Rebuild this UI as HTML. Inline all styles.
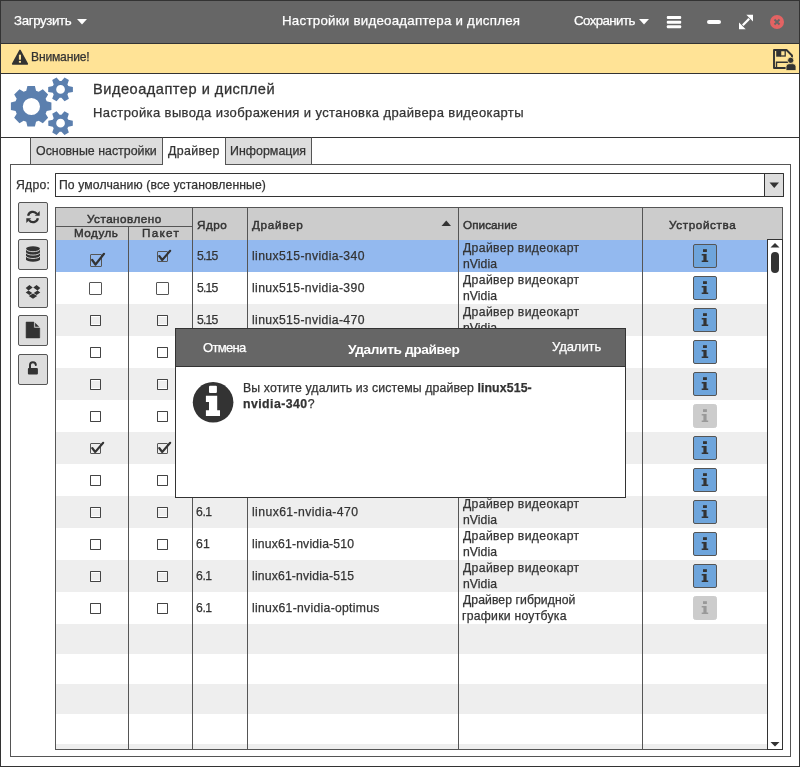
<!DOCTYPE html>
<html><head><meta charset="utf-8">
<style>
*{box-sizing:border-box;margin:0;padding:0}
html,body{width:800px;height:767px;overflow:hidden;background:#fff}
body{position:relative;font-family:"Liberation Sans",sans-serif;color:#333;font-size:12.3px}
.a{position:absolute}
.t{position:absolute;white-space:nowrap;line-height:1;-webkit-text-stroke:0.25px currentColor;will-change:transform}
.cb{position:absolute;width:12.5px;height:12.5px;border:1.3px solid #555;background:#fff;border-radius:1px}
.cbu{position:absolute;width:11px;height:11px;border:1.2px solid #444;border-radius:0.7px;box-shadow:inset 0 1px #fff,inset 0 -1px #fff}
.cbc{position:absolute;width:11px;height:11px;border:1.3px solid #555;border-radius:1px}
.ib{position:absolute;left:693px;width:24px;height:24px;background:#6ea5dc;border:1px solid #555;border-radius:2px}
.ibd{position:absolute;left:693px;width:24px;height:24px;background:#ccc;border:1px solid #ccc;border-radius:2.5px}
.sb{position:absolute;left:18px;width:30px;height:31px;background:#ddd;border:1.3px solid #555;border-radius:2px}
</style></head><body>

<div class="a" style="left:0;top:0;width:800px;height:767px;border:1px solid #333"></div>
<div class="a" style="left:1px;top:1px;width:798px;height:42px;background:#666"></div>
<div class="a" style="left:1px;top:43px;width:798px;height:1px;background:#333"></div>
<div class="t" style="left:14.00px;top:14.49px;font-size:13.3px;font-weight:400;letter-spacing:-0.375px;color:#fff;-webkit-text-stroke:0.25px #fff;">Загрузить</div>
<svg class="a" style="left:77px;top:19px" width="10" height="6"><path d="M0 0H10L5 5.5Z" fill="#fff"/></svg>
<div class="t" style="left:282.00px;top:14.49px;font-size:13.3px;font-weight:400;letter-spacing:0.25px;color:#fff;-webkit-text-stroke:0.25px #fff;">Настройки видеоадаптера и дисплея</div>
<div class="t" style="left:574.25px;top:14.49px;font-size:13.3px;font-weight:400;letter-spacing:-0.594px;color:#fff;-webkit-text-stroke:0.25px #fff;">Сохранить</div>
<svg class="a" style="left:639px;top:19px" width="10" height="6"><path d="M0 0H10L5 5.5Z" fill="#fff"/></svg>
<svg class="a" style="left:666px;top:15px" width="16" height="15"><rect x="0.8" y="1" width="14.4" height="3" rx="1" fill="#fff"/><rect x="0.8" y="5.75" width="14.4" height="3" rx="1" fill="#fff"/><rect x="0.8" y="10.2" width="14.4" height="3" rx="1" fill="#fff"/></svg>
<svg class="a" style="left:706px;top:19px" width="16" height="6"><rect x="1" y="1" width="14" height="4" rx="2" fill="#fff"/></svg>
<svg class="a" style="left:736px;top:12px" width="20" height="20"><path d="M10.3 2.8H17V9.5Z" fill="#fff"/><path d="M3 10.5V17.2H9.7Z" fill="#fff"/><path d="M13.2 6.8L6.8 13.2" stroke="#fff" stroke-width="2.3"/></svg>
<svg class="a" style="left:767px;top:12px" width="20" height="20"><circle cx="10" cy="10" r="7" fill="#e36363"/><path d="M7.5 7.5L12.5 12.5M12.5 7.5L7.5 12.5" stroke="#666" stroke-width="1.8" stroke-linecap="butt"/></svg>
<div class="a" style="left:1px;top:44px;width:798px;height:29px;background:#ffe396"></div>
<div class="a" style="left:1px;top:73px;width:798px;height:1px;background:#333"></div>
<svg class="a" style="left:11px;top:49px" width="18" height="17"><path d="M9 1.4L16.3 15H1.7Z" fill="#333" stroke="#333" stroke-width="1.6" stroke-linejoin="round"/><rect x="7.9" y="5.7" width="2.1" height="5" fill="#ffe396"/><rect x="7.9" y="11.9" width="2.1" height="1.8" fill="#ffe396"/></svg>
<div class="t" style="left:31.40px;top:50.96px;font-size:12.1px;font-weight:400;letter-spacing:-0.175px;color:#333;-webkit-text-stroke:0.25px #333;">Внимание!</div>
<svg class="a" style="left:772px;top:48px" width="26" height="24"><path d="M2 2H14.5L20 7.5V20H2Z" fill="none" stroke="#333" stroke-width="1.9" stroke-linejoin="round"/><rect x="4.2" y="2" width="4.6" height="6.7" fill="#333"/><rect x="8.6" y="2.6" width="4.6" height="5.4" fill="none" stroke="#333" stroke-width="1.3"/><path d="M4.5 20V14.2H16" fill="none" stroke="#333" stroke-width="1.4"/><circle cx="18.7" cy="12.3" r="3.1" fill="#333" stroke="#ffe396" stroke-width="0.8"/><path d="M14 22.5V18.7Q14 15.7 17 15.7H21Q24 15.7 24 18.7V22.5Z" fill="#333" stroke="#ffe396" stroke-width="0.8"/></svg>
<svg class="a" style="left:5px;top:74px" width="75" height="62"><path fill="#5b7fae" fill-rule="evenodd" d="M41.70 27.30 L46.41 28.45 L46.41 35.95 L41.70 37.10 L40.61 39.73 L43.12 43.87 L37.82 49.17 L33.68 46.66 L31.05 47.75 L29.90 52.46 L22.40 52.46 L21.25 47.75 L18.62 46.66 L14.48 49.17 L9.18 43.87 L11.69 39.73 L10.60 37.10 L5.89 35.95 L5.89 28.45 L10.60 27.30 L11.69 24.67 L9.18 20.53 L14.48 15.23 L18.62 17.74 L21.25 16.65 L22.40 11.94 L29.90 11.94 L31.05 16.65 L33.68 17.74 L37.82 15.23 L43.12 20.53 L40.61 24.67Z M35.00 32.50 A8.6 8.6 0 1 0 17.80 32.50 A8.6 8.6 0 1 0 35.00 32.50Z M63.32 11.95 L67.90 12.90 L67.90 17.90 L63.32 18.85 L62.42 20.40 L63.89 24.84 L59.56 27.34 L56.45 23.85 L54.65 23.85 L51.54 27.34 L47.21 24.84 L48.68 20.40 L47.78 18.85 L43.20 17.90 L43.20 12.90 L47.78 11.95 L48.68 10.40 L47.21 5.96 L51.54 3.46 L54.65 6.95 L56.45 6.95 L59.56 3.46 L63.89 5.96 L62.42 10.40Z M59.90 15.40 A4.35 4.35 0 1 0 51.20 15.40 A4.35 4.35 0 1 0 59.90 15.40Z M63.32 45.75 L67.80 46.70 L67.80 51.70 L63.32 52.65 L62.42 54.20 L63.84 58.56 L59.51 61.06 L56.45 57.65 L54.65 57.65 L51.59 61.06 L47.26 58.56 L48.68 54.20 L47.78 52.65 L43.30 51.70 L43.30 46.70 L47.78 45.75 L48.68 44.20 L47.26 39.84 L51.59 37.34 L54.65 40.75 L56.45 40.75 L59.51 37.34 L63.84 39.84 L62.42 44.20Z M59.90 49.20 A4.35 4.35 0 1 0 51.20 49.20 A4.35 4.35 0 1 0 59.90 49.20Z"/></svg>
<div class="t" style="left:92.80px;top:82.14px;font-size:14.6px;font-weight:400;letter-spacing:0.505px;color:#333;-webkit-text-stroke:0.3px #333;">Видеоадаптер и дисплей</div>
<div class="t" style="left:93.20px;top:105.50px;font-size:13.0px;font-weight:400;letter-spacing:0.397px;color:#333;-webkit-text-stroke:0.25px #333;">Настройка вывода изображения и установка драйвера видеокарты</div>
<div class="a" style="left:1px;top:137px;width:798px;height:1px;background:#333"></div>
<div class="a" style="left:10px;top:164px;width:781px;height:593px;border:1px solid #555"></div>
<div class="a" style="left:30px;top:137px;width:133px;height:28px;background:#ddd;border:1px solid #555;border-top-color:#333"></div>
<div class="a" style="left:225px;top:137px;width:87px;height:28px;background:#ddd;border:1px solid #555;border-top-color:#333"></div>
<div class="a" style="left:162px;top:137px;width:64px;height:28px;background:#fff;border:1px solid #555;border-top-color:#333;border-bottom:none"></div>
<div class="t" style="left:36.40px;top:144.50px;font-size:12.4px;font-weight:400;letter-spacing:-0.006px;color:#333;-webkit-text-stroke:0.25px #333;">Основные настройки</div>
<div class="t" style="left:168.40px;top:144.50px;font-size:12.4px;font-weight:400;letter-spacing:0.333px;color:#333;-webkit-text-stroke:0.25px #333;">Драйвер</div>
<div class="t" style="left:230.00px;top:144.50px;font-size:12.4px;font-weight:400;letter-spacing:0.022px;color:#333;-webkit-text-stroke:0.25px #333;">Информация</div>
<div class="t" style="left:16.40px;top:178.57px;font-size:12.2px;font-weight:400;letter-spacing:0.25px;color:#333;-webkit-text-stroke:0.25px #333;">Ядро:</div>
<div class="a" style="left:55px;top:173px;width:729px;height:24px;border:1.3px solid #333;border-radius:0.5px;background:#fff"></div>
<div class="a" style="left:764px;top:174px;width:19px;height:22px;background:#ddd;border-left:1.3px solid #333"></div>
<svg class="a" style="left:769px;top:182px" width="11" height="7"><path d="M0.5 0.5H10L5.25 6Z" fill="#333"/></svg>
<div class="t" style="left:59.00px;top:178.57px;font-size:12.2px;font-weight:400;letter-spacing:0.113px;color:#333;-webkit-text-stroke:0.25px #333;">По умолчанию (все установленные)</div>
<div class="sb" style="top:202px"></div>
<div class="sb" style="top:239px"></div>
<div class="sb" style="top:277px"></div>
<div class="sb" style="top:315px"></div>
<div class="sb" style="top:354px"></div>
<svg class="a" style="left:24px;top:208px" width="18" height="18"><path d="M4.1 7.7A4.9 4.9 0 0 1 12.9 5.9" fill="none" stroke="#333" stroke-width="2.3"/><path d="M10.8 7.7H15.7V3Z" fill="#333"/><path d="M13.9 10.3A4.9 4.9 0 0 1 5.1 12.1" fill="none" stroke="#333" stroke-width="2.3"/><path d="M7.2 10.3H2.3V15Z" fill="#333"/></svg>
<svg class="a" style="left:24px;top:244px" width="18" height="20"><path d="M2 4.9A7 2.6 0 0 1 16 4.9V15.2A7 2.6 0 0 1 2 15.2Z" fill="#333"/><path d="M2 5.1A7 2.6 0 0 0 16 5.1M2 8.5A7 2.6 0 0 0 16 8.5M2 11.9A7 2.6 0 0 0 16 11.9" fill="none" stroke="#ddd" stroke-width="0.9"/></svg>
<svg class="a" style="left:24px;top:282px" width="18" height="20"><path d="M5.4 3L8.7 5.4L4.5 8.4L1.7 6Z M12.6 3L16.3 6L13.5 8.4L9.3 5.4Z M1.7 10.6L4.5 8.4L8.3 10.9L5.4 13.1Z M16.3 10.6L13.5 8.4L9.7 10.9L12.6 13.1Z M9 11.4L13.2 14L9 16.8L4.8 14Z" fill="#333"/></svg>
<svg class="a" style="left:22px;top:318px" width="22" height="24"><path d="M4.1 4.1H11.9V10H17.7V19.9H4.1Z" fill="#333" stroke="#333" stroke-width="0.6" stroke-linejoin="round"/><path d="M13.1 4.7V8.8H17.2Z" fill="#333"/></svg>
<svg class="a" style="left:22px;top:356px" width="22" height="26"><path d="M8 12.5V9.1A2.9 2.9 0 0 1 13.8 9.1" fill="none" stroke="#333" stroke-width="2" stroke-linecap="round"/><rect x="5.9" y="12" width="10" height="6.6" rx="1" fill="#333"/></svg>
<div class="a" style="left:55px;top:207px;width:728px;height:33px;background:#ccc"></div>
<div class="a" style="left:55px;top:240px;width:712px;height:32px;background:#93b9ef"></div>
<div class="t" style="left:196.75px;top:250.17px;font-size:12.2px;font-weight:400;letter-spacing:-0.817px;color:#333;-webkit-text-stroke:0.25px #333;">5.15</div>
<div class="t" style="left:251.75px;top:250.17px;font-size:12.2px;font-weight:400;letter-spacing:0.375px;color:#333;-webkit-text-stroke:0.25px #333;">linux515-nvidia-340</div>
<div class="t" style="left:462.60px;top:242.37px;font-size:12.2px;font-weight:400;letter-spacing:0.363px;color:#333;-webkit-text-stroke:0.25px #333;">Драйвер видеокарт</div>
<div class="t" style="left:462.90px;top:258.37px;font-size:12.2px;font-weight:400;letter-spacing:0.06px;color:#333;-webkit-text-stroke:0.25px #333;">nVidia</div>
<div class="cbc" style="left:89.5px;top:254.4px;width:12.5px;height:12.2px"></div>
<svg class="a" style="left:89.5px;top:252px" width="16" height="16"><path d="M2.2 8L5.5 12.5L14 1.8" fill="none" stroke="#333" stroke-width="2.2" stroke-linecap="round" stroke-linejoin="round"/></svg>
<div class="cbc" style="left:157.2px;top:251.2px"></div>
<svg class="a" style="left:157.2px;top:249px" width="16" height="16"><path d="M2.2 7L5.2 11L13.2 1.8" fill="none" stroke="#333" stroke-width="2.1" stroke-linecap="round" stroke-linejoin="round"/></svg>
<div class="ib" style="top:244px"><svg class="a" style="left:-1px;top:-1px" width="24" height="24"><rect x="10" y="5.2" width="3.9" height="2.8" fill="#333"/><path d="M8.7 10H13.6V16.4H15.2V18.1H8.7V16.4H10.4V11.6H8.7Z" fill="#333"/></svg></div>
<div class="a" style="left:55px;top:272px;width:712px;height:32px;background:#fff"></div>
<div class="t" style="left:196.75px;top:282.17px;font-size:12.2px;font-weight:400;letter-spacing:-0.817px;color:#333;-webkit-text-stroke:0.25px #333;">5.15</div>
<div class="t" style="left:251.75px;top:282.17px;font-size:12.2px;font-weight:400;letter-spacing:0.375px;color:#333;-webkit-text-stroke:0.25px #333;">linux515-nvidia-390</div>
<div class="t" style="left:462.60px;top:274.37px;font-size:12.2px;font-weight:400;letter-spacing:0.363px;color:#333;-webkit-text-stroke:0.25px #333;">Драйвер видеокарт</div>
<div class="t" style="left:462.90px;top:290.37px;font-size:12.2px;font-weight:400;letter-spacing:0.06px;color:#333;-webkit-text-stroke:0.25px #333;">nVidia</div>
<div class="cb" style="left:89.25px;top:282px;width:12.75px;height:12.75px"></div>
<div class="cb" style="left:156.1px;top:282px;width:12.75px;height:12.75px"></div>
<div class="ib" style="top:276px"><svg class="a" style="left:-1px;top:-1px" width="24" height="24"><rect x="10" y="5.2" width="3.9" height="2.8" fill="#333"/><path d="M8.7 10H13.6V16.4H15.2V18.1H8.7V16.4H10.4V11.6H8.7Z" fill="#333"/></svg></div>
<div class="a" style="left:55px;top:304px;width:712px;height:32px;background:#eeeeee"></div>
<div class="t" style="left:196.75px;top:314.17px;font-size:12.2px;font-weight:400;letter-spacing:-0.817px;color:#333;-webkit-text-stroke:0.25px #333;">5.15</div>
<div class="t" style="left:251.75px;top:314.17px;font-size:12.2px;font-weight:400;letter-spacing:0.375px;color:#333;-webkit-text-stroke:0.25px #333;">linux515-nvidia-470</div>
<div class="t" style="left:462.60px;top:306.37px;font-size:12.2px;font-weight:400;letter-spacing:0.363px;color:#333;-webkit-text-stroke:0.25px #333;">Драйвер видеокарт</div>
<div class="t" style="left:462.90px;top:322.37px;font-size:12.2px;font-weight:400;letter-spacing:0.06px;color:#333;-webkit-text-stroke:0.25px #333;">nVidia</div>
<div class="cbu" style="left:90.2px;top:315px"></div>
<div class="cbu" style="left:157.1px;top:315px"></div>
<div class="ib" style="top:308px"><svg class="a" style="left:-1px;top:-1px" width="24" height="24"><rect x="10" y="5.2" width="3.9" height="2.8" fill="#333"/><path d="M8.7 10H13.6V16.4H15.2V18.1H8.7V16.4H10.4V11.6H8.7Z" fill="#333"/></svg></div>
<div class="a" style="left:55px;top:336px;width:712px;height:32px;background:#fff"></div>
<div class="t" style="left:196.75px;top:346.17px;font-size:12.2px;font-weight:400;letter-spacing:-0.817px;color:#333;-webkit-text-stroke:0.25px #333;">5.15</div>
<div class="t" style="left:251.75px;top:346.17px;font-size:12.2px;font-weight:400;letter-spacing:0.375px;color:#333;-webkit-text-stroke:0.25px #333;">linux515-nvidia-510</div>
<div class="t" style="left:462.60px;top:338.37px;font-size:12.2px;font-weight:400;letter-spacing:0.363px;color:#333;-webkit-text-stroke:0.25px #333;">Драйвер видеокарт</div>
<div class="t" style="left:462.90px;top:354.37px;font-size:12.2px;font-weight:400;letter-spacing:0.06px;color:#333;-webkit-text-stroke:0.25px #333;">nVidia</div>
<div class="cbu" style="left:90.2px;top:347px"></div>
<div class="cbu" style="left:157.1px;top:347px"></div>
<div class="ib" style="top:340px"><svg class="a" style="left:-1px;top:-1px" width="24" height="24"><rect x="10" y="5.2" width="3.9" height="2.8" fill="#333"/><path d="M8.7 10H13.6V16.4H15.2V18.1H8.7V16.4H10.4V11.6H8.7Z" fill="#333"/></svg></div>
<div class="a" style="left:55px;top:368px;width:712px;height:32px;background:#eeeeee"></div>
<div class="t" style="left:196.75px;top:378.17px;font-size:12.2px;font-weight:400;letter-spacing:-0.817px;color:#333;-webkit-text-stroke:0.25px #333;">5.15</div>
<div class="t" style="left:251.75px;top:378.17px;font-size:12.2px;font-weight:400;letter-spacing:0.375px;color:#333;-webkit-text-stroke:0.25px #333;">linux515-nvidia-515</div>
<div class="t" style="left:462.60px;top:370.37px;font-size:12.2px;font-weight:400;letter-spacing:0.363px;color:#333;-webkit-text-stroke:0.25px #333;">Драйвер видеокарт</div>
<div class="t" style="left:462.90px;top:386.37px;font-size:12.2px;font-weight:400;letter-spacing:0.06px;color:#333;-webkit-text-stroke:0.25px #333;">nVidia</div>
<div class="cbu" style="left:90.2px;top:379px"></div>
<div class="cbu" style="left:157.1px;top:379px"></div>
<div class="ib" style="top:372px"><svg class="a" style="left:-1px;top:-1px" width="24" height="24"><rect x="10" y="5.2" width="3.9" height="2.8" fill="#333"/><path d="M8.7 10H13.6V16.4H15.2V18.1H8.7V16.4H10.4V11.6H8.7Z" fill="#333"/></svg></div>
<div class="a" style="left:55px;top:400px;width:712px;height:32px;background:#fff"></div>
<div class="t" style="left:196.75px;top:410.17px;font-size:12.2px;font-weight:400;letter-spacing:-0.817px;color:#333;-webkit-text-stroke:0.25px #333;">5.15</div>
<div class="t" style="left:251.75px;top:410.17px;font-size:12.2px;font-weight:400;letter-spacing:0.375px;color:#333;-webkit-text-stroke:0.25px #333;">linux515-nvidia-optimus</div>
<div class="t" style="left:462.60px;top:402.37px;font-size:12.2px;font-weight:400;letter-spacing:0.075px;color:#333;-webkit-text-stroke:0.25px #333;">Драйвер гибридной</div>
<div class="t" style="left:461.60px;top:418.37px;font-size:12.2px;font-weight:400;letter-spacing:0.26px;color:#333;-webkit-text-stroke:0.25px #333;">графики ноутбука</div>
<div class="cbu" style="left:90.2px;top:411px"></div>
<div class="cbu" style="left:157.1px;top:411px"></div>
<div class="ibd" style="top:404px"><svg class="a" style="left:-1px;top:-1px" width="24" height="24"><rect x="10" y="5.2" width="3.9" height="2.8" fill="#999"/><path d="M8.7 10H13.6V16.4H15.2V18.1H8.7V16.4H10.4V11.6H8.7Z" fill="#999"/></svg></div>
<div class="a" style="left:55px;top:432px;width:712px;height:32px;background:#eeeeee"></div>
<div class="t" style="left:196.30px;top:442.17px;font-size:12.2px;font-weight:400;letter-spacing:-0.4px;color:#333;-webkit-text-stroke:0.25px #333;">6.1</div>
<div class="t" style="left:251.75px;top:442.17px;font-size:12.2px;font-weight:400;letter-spacing:0.375px;color:#333;-webkit-text-stroke:0.25px #333;">linux61-nvidia-340</div>
<div class="t" style="left:462.60px;top:434.37px;font-size:12.2px;font-weight:400;letter-spacing:0.363px;color:#333;-webkit-text-stroke:0.25px #333;">Драйвер видеокарт</div>
<div class="t" style="left:462.90px;top:450.37px;font-size:12.2px;font-weight:400;letter-spacing:0.06px;color:#333;-webkit-text-stroke:0.25px #333;">nVidia</div>
<div class="cbc" style="left:90.2px;top:443px"></div>
<svg class="a" style="left:90.2px;top:441px" width="16" height="16"><path d="M2.2 7L5.2 11L13.2 1.8" fill="none" stroke="#333" stroke-width="2.1" stroke-linecap="round" stroke-linejoin="round"/></svg>
<div class="cbc" style="left:157.2px;top:443px"></div>
<svg class="a" style="left:157.2px;top:441px" width="16" height="16"><path d="M2.2 7L5.2 11L13.2 1.8" fill="none" stroke="#333" stroke-width="2.1" stroke-linecap="round" stroke-linejoin="round"/></svg>
<div class="ib" style="top:436px"><svg class="a" style="left:-1px;top:-1px" width="24" height="24"><rect x="10" y="5.2" width="3.9" height="2.8" fill="#333"/><path d="M8.7 10H13.6V16.4H15.2V18.1H8.7V16.4H10.4V11.6H8.7Z" fill="#333"/></svg></div>
<div class="a" style="left:55px;top:464px;width:712px;height:32px;background:#fff"></div>
<div class="t" style="left:196.30px;top:474.17px;font-size:12.2px;font-weight:400;letter-spacing:-0.4px;color:#333;-webkit-text-stroke:0.25px #333;">6.1</div>
<div class="t" style="left:251.75px;top:474.17px;font-size:12.2px;font-weight:400;letter-spacing:0.375px;color:#333;-webkit-text-stroke:0.25px #333;">linux61-nvidia-390</div>
<div class="t" style="left:462.60px;top:466.37px;font-size:12.2px;font-weight:400;letter-spacing:0.363px;color:#333;-webkit-text-stroke:0.25px #333;">Драйвер видеокарт</div>
<div class="t" style="left:462.90px;top:482.37px;font-size:12.2px;font-weight:400;letter-spacing:0.06px;color:#333;-webkit-text-stroke:0.25px #333;">nVidia</div>
<div class="cbu" style="left:90.2px;top:475px"></div>
<div class="cbu" style="left:157.1px;top:475px"></div>
<div class="ib" style="top:468px"><svg class="a" style="left:-1px;top:-1px" width="24" height="24"><rect x="10" y="5.2" width="3.9" height="2.8" fill="#333"/><path d="M8.7 10H13.6V16.4H15.2V18.1H8.7V16.4H10.4V11.6H8.7Z" fill="#333"/></svg></div>
<div class="a" style="left:55px;top:496px;width:712px;height:32px;background:#eeeeee"></div>
<div class="t" style="left:196.30px;top:506.17px;font-size:12.2px;font-weight:400;letter-spacing:-0.4px;color:#333;-webkit-text-stroke:0.25px #333;">6.1</div>
<div class="t" style="left:251.75px;top:506.17px;font-size:12.2px;font-weight:400;letter-spacing:0.415px;color:#333;-webkit-text-stroke:0.25px #333;">linux61-nvidia-470</div>
<div class="t" style="left:462.60px;top:498.37px;font-size:12.2px;font-weight:400;letter-spacing:0.363px;color:#333;-webkit-text-stroke:0.25px #333;">Драйвер видеокарт</div>
<div class="t" style="left:462.90px;top:514.37px;font-size:12.2px;font-weight:400;letter-spacing:0.06px;color:#333;-webkit-text-stroke:0.25px #333;">nVidia</div>
<div class="cbu" style="left:90.2px;top:507px"></div>
<div class="cbu" style="left:157.1px;top:507px"></div>
<div class="ib" style="top:500px"><svg class="a" style="left:-1px;top:-1px" width="24" height="24"><rect x="10" y="5.2" width="3.9" height="2.8" fill="#333"/><path d="M8.7 10H13.6V16.4H15.2V18.1H8.7V16.4H10.4V11.6H8.7Z" fill="#333"/></svg></div>
<div class="a" style="left:55px;top:528px;width:712px;height:32px;background:#fff"></div>
<div class="t" style="left:196.30px;top:538.17px;font-size:12.2px;font-weight:400;letter-spacing:0.2px;color:#333;-webkit-text-stroke:0.25px #333;">61</div>
<div class="t" style="left:251.75px;top:538.17px;font-size:12.2px;font-weight:400;letter-spacing:0.185px;color:#333;-webkit-text-stroke:0.25px #333;">linux61-nvidia-510</div>
<div class="t" style="left:462.60px;top:530.37px;font-size:12.2px;font-weight:400;letter-spacing:0.363px;color:#333;-webkit-text-stroke:0.25px #333;">Драйвер видеокарт</div>
<div class="t" style="left:462.90px;top:546.37px;font-size:12.2px;font-weight:400;letter-spacing:0.06px;color:#333;-webkit-text-stroke:0.25px #333;">nVidia</div>
<div class="cbu" style="left:90.2px;top:539px"></div>
<div class="cbu" style="left:157.1px;top:539px"></div>
<div class="ib" style="top:532px"><svg class="a" style="left:-1px;top:-1px" width="24" height="24"><rect x="10" y="5.2" width="3.9" height="2.8" fill="#333"/><path d="M8.7 10H13.6V16.4H15.2V18.1H8.7V16.4H10.4V11.6H8.7Z" fill="#333"/></svg></div>
<div class="a" style="left:55px;top:560px;width:712px;height:32px;background:#eeeeee"></div>
<div class="t" style="left:196.30px;top:570.17px;font-size:12.2px;font-weight:400;letter-spacing:-0.4px;color:#333;-webkit-text-stroke:0.25px #333;">6.1</div>
<div class="t" style="left:251.75px;top:570.17px;font-size:12.2px;font-weight:400;letter-spacing:0.179px;color:#333;-webkit-text-stroke:0.25px #333;">linux61-nvidia-515</div>
<div class="t" style="left:462.60px;top:562.37px;font-size:12.2px;font-weight:400;letter-spacing:0.363px;color:#333;-webkit-text-stroke:0.25px #333;">Драйвер видеокарт</div>
<div class="t" style="left:462.90px;top:578.37px;font-size:12.2px;font-weight:400;letter-spacing:0.06px;color:#333;-webkit-text-stroke:0.25px #333;">nVidia</div>
<div class="cbu" style="left:90.2px;top:571px"></div>
<div class="cbu" style="left:157.1px;top:571px"></div>
<div class="ib" style="top:564px"><svg class="a" style="left:-1px;top:-1px" width="24" height="24"><rect x="10" y="5.2" width="3.9" height="2.8" fill="#333"/><path d="M8.7 10H13.6V16.4H15.2V18.1H8.7V16.4H10.4V11.6H8.7Z" fill="#333"/></svg></div>
<div class="a" style="left:55px;top:592px;width:712px;height:32px;background:#fff"></div>
<div class="t" style="left:196.30px;top:602.17px;font-size:12.2px;font-weight:400;letter-spacing:-0.4px;color:#333;-webkit-text-stroke:0.25px #333;">6.1</div>
<div class="t" style="left:251.75px;top:602.17px;font-size:12.2px;font-weight:400;letter-spacing:0.293px;color:#333;-webkit-text-stroke:0.25px #333;">linux61-nvidia-optimus</div>
<div class="t" style="left:462.60px;top:594.37px;font-size:12.2px;font-weight:400;letter-spacing:0.075px;color:#333;-webkit-text-stroke:0.25px #333;">Драйвер гибридной</div>
<div class="t" style="left:461.60px;top:610.37px;font-size:12.2px;font-weight:400;letter-spacing:0.26px;color:#333;-webkit-text-stroke:0.25px #333;">графики ноутбука</div>
<div class="cbu" style="left:90.2px;top:603px"></div>
<div class="cbu" style="left:157.1px;top:603px"></div>
<div class="ibd" style="top:596px"><svg class="a" style="left:-1px;top:-1px" width="24" height="24"><rect x="10" y="5.2" width="3.9" height="2.8" fill="#999"/><path d="M8.7 10H13.6V16.4H15.2V18.1H8.7V16.4H10.4V11.6H8.7Z" fill="#999"/></svg></div>
<div class="a" style="left:55px;top:624px;width:712px;height:30px;background:#eeeeee"></div>
<div class="a" style="left:55px;top:654px;width:712px;height:30px;background:#fff"></div>
<div class="a" style="left:55px;top:684px;width:712px;height:30px;background:#eeeeee"></div>
<div class="a" style="left:55px;top:714px;width:712px;height:30px;background:#fff"></div>
<div class="a" style="left:55px;top:744px;width:712px;height:6px;background:#eeeeee"></div>
<div class="a" style="left:192px;top:207px;width:1px;height:543px;background:#555"></div>
<div class="a" style="left:247px;top:207px;width:1px;height:543px;background:#555"></div>
<div class="a" style="left:458px;top:207px;width:1px;height:543px;background:#555"></div>
<div class="a" style="left:642px;top:207px;width:1px;height:543px;background:#555"></div>
<div class="a" style="left:128px;top:226px;width:1px;height:524px;background:#555"></div>
<div class="a" style="left:55px;top:226px;width:137px;height:1px;background:#555"></div>
<div class="a" style="left:55px;top:207px;width:728px;height:543px;border:1px solid #555"></div>
<div class="t" style="left:87.00px;top:212.60px;font-size:11.7px;font-weight:400;letter-spacing:0.475px;color:#333;-webkit-text-stroke:0.45px #333;">Установлено</div>
<div class="t" style="left:73.50px;top:227.10px;font-size:11.7px;font-weight:400;letter-spacing:0.5px;color:#333;-webkit-text-stroke:0.45px #333;">Модуль</div>
<div class="t" style="left:142.00px;top:227.10px;font-size:11.7px;font-weight:400;letter-spacing:1.312px;color:#333;-webkit-text-stroke:0.45px #333;">Пакет</div>
<div class="t" style="left:196.75px;top:218.70px;font-size:11.7px;font-weight:400;letter-spacing:0.5px;color:#333;-webkit-text-stroke:0.45px #333;">Ядро</div>
<div class="t" style="left:251.50px;top:218.50px;font-size:11.7px;font-weight:400;letter-spacing:0.708px;color:#333;-webkit-text-stroke:0.45px #333;">Драйвер</div>
<svg class="a" style="left:441px;top:220px" width="11" height="7"><path d="M0.5 6H10L5.25 0.5Z" fill="#333"/></svg>
<div class="t" style="left:462.75px;top:218.60px;font-size:11.7px;font-weight:400;letter-spacing:0.064px;color:#333;-webkit-text-stroke:0.45px #333;">Описание</div>
<div class="t" style="left:668.50px;top:218.80px;font-size:11.7px;font-weight:400;letter-spacing:0.622px;color:#333;-webkit-text-stroke:0.45px #333;">Устройства</div>
<div class="a" style="left:767px;top:239px;width:16px;height:511px;background:#fff;border:1px solid #333"></div>
<svg class="a" style="left:770px;top:243px" width="10" height="5"><path d="M0.5 4.5H9.5L5 0Z" fill="#333"/></svg>
<div class="a" style="left:771px;top:252px;width:8px;height:21px;background:#333;border-radius:4px"></div>
<svg class="a" style="left:770px;top:742px" width="10" height="5"><path d="M0.5 0H9.5L5 4.5Z" fill="#333"/></svg>
<div class="a" style="left:175px;top:328px;width:451px;height:170px;background:#fff;border:1px solid #333"></div>
<div class="a" style="left:176px;top:329px;width:449px;height:37px;background:#666"></div>
<div class="a" style="left:176px;top:366px;width:449px;height:1px;background:#333"></div>
<div class="t" style="left:203.10px;top:340.90px;font-size:13.0px;font-weight:400;letter-spacing:-0.66px;color:#fff;-webkit-text-stroke:0.25px #fff;">Отмена</div>
<div class="t" style="left:347.50px;top:342.60px;font-size:13.7px;font-weight:700;letter-spacing:-0.386px;color:#fff;-webkit-text-stroke:0.0px #fff;">Удалить драйвер</div>
<div class="t" style="left:552.30px;top:340.40px;font-size:13.0px;font-weight:400;letter-spacing:-0.067px;color:#fff;-webkit-text-stroke:0.25px #fff;">Удалить</div>
<svg class="a" style="left:192px;top:381px" width="44" height="44"><circle cx="21.1" cy="21.3" r="20.3" fill="#333"/><rect x="17" y="4.8" width="7.9" height="7.2" rx="1" fill="#fff"/><path d="M13.9 14.8H25.2V29.2H28V35.1H13.9V29.2H17V21H13.9Z" fill="#fff"/></svg>
<div class="t" style="left:243.00px;top:382.19px;font-size:12.3px;font-weight:400;letter-spacing:0.122px;color:#333;-webkit-text-stroke:0.25px #333;">Вы хотите удалить из системы драйвер <b>linux515-</b></div>
<div class="t" style="left:243.00px;top:397.99px;font-size:12.3px;font-weight:400;letter-spacing:0.45px;color:#333;-webkit-text-stroke:0.25px #333;"><b>nvidia-340</b>?</div>
</body></html>
